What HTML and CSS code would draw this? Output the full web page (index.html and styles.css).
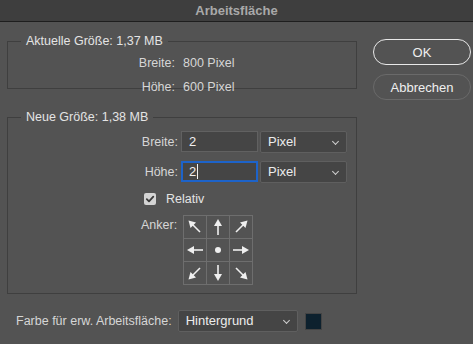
FILE: index.html
```html
<!DOCTYPE html>
<html lang="de">
<head>
    <meta charset="UTF-8">
    <meta name="viewport" content="width=device-width, initial-scale=1.0">
    <title>Arbeitsfläche</title>
    <link rel="stylesheet" href="styles.css">
</head>
<body>
    <div class="dialog">
        <div class="title-bar">Arbeitsfläche</div>
        <div class="dialog-body">
            <div class="dialog-main">
                <fieldset class="group group-current">
                    <legend>Aktuelle Größe: 1,37 MB</legend>
                    <div class="info-row">
                        <span class="info-label">Breite:</span>
                        <span class="info-value">800 Pixel</span>
                    </div>
                    <div class="info-row">
                        <span class="info-label">Höhe:</span>
                        <span class="info-value">600 Pixel</span>
                    </div>
                </fieldset>

                <fieldset class="group group-new">
                    <legend>Neue Größe: 1,38 MB</legend>
                    <div class="field-row">
                        <label class="field-label">Breite:</label>
                        <div class="text-input">2</div>
                        <div class="select-box select-unit">Pixel <span class="chevron"></span></div>
                    </div>
                    <div class="field-row">
                        <label class="field-label">Höhe:</label>
                        <div class="text-input is-focused">2<span class="caret"></span></div>
                        <div class="select-box select-unit">Pixel <span class="chevron"></span></div>
                    </div>
                    <div class="check-row">
                        <span class="checkbox">
                            <svg width="10" height="10" viewBox="0 0 10 10"><path d="M1.8 5.2 L4 7.4 L8.3 2.6" fill="none" stroke="#3a3a3a" stroke-width="1.8" stroke-linecap="round" stroke-linejoin="round"/></svg>
                        </span>
                        <span>Relativ</span>
                    </div>
                    <div class="anchor-row">
                        <span class="field-label anchor-label">Anker:</span>
                        <div class="anchor-grid">
                            <div class="cell"><svg viewBox="0 0 22 22"><path d="M16 16 L8 8"/><path d="M4.5 4.5 L12 6.5 L6.5 12 Z" class="head"/></svg></div>
                            <div class="cell"><svg viewBox="0 0 22 22"><path d="M11 19 L11 8"/><path d="M11 3 L15 10 L7 10 Z" class="head"/></svg></div>
                            <div class="cell"><svg viewBox="0 0 22 22"><path d="M6 16 L14 8"/><path d="M17.5 4.5 L15.5 12 L10 6.5 Z" class="head"/></svg></div>
                            <div class="cell"><svg viewBox="0 0 22 22"><path d="M19 11 L8 11"/><path d="M3 11 L10 7 L10 15 Z" class="head"/></svg></div>
                            <div class="cell"><svg viewBox="0 0 22 22"><circle cx="11" cy="11" r="3" class="head"/></svg></div>
                            <div class="cell"><svg viewBox="0 0 22 22"><path d="M3 11 L14 11"/><path d="M19 11 L12 7 L12 15 Z" class="head"/></svg></div>
                            <div class="cell"><svg viewBox="0 0 22 22"><path d="M16 6 L8 14"/><path d="M4.5 17.5 L6.5 10 L12 15.5 Z" class="head"/></svg></div>
                            <div class="cell"><svg viewBox="0 0 22 22"><path d="M11 3 L11 14"/><path d="M11 19 L15 12 L7 12 Z" class="head"/></svg></div>
                            <div class="cell"><svg viewBox="0 0 22 22"><path d="M6 6 L14 14"/><path d="M17.5 17.5 L10 15.5 L15.5 10 Z" class="head"/></svg></div>
                        </div>
                    </div>
                </fieldset>
            </div>

            <div class="dialog-buttons">
                <button type="button" class="btn btn-default">OK</button>
                <button type="button" class="btn">Abbrechen</button>
            </div>
        </div>

        <div class="footer-row">
            <span class="footer-label">Farbe für erw. Arbeitsfläche:</span>
            <div class="select-box select-fill">Hintergrund <span class="chevron"></span></div>
            <span class="swatch"></span>
        </div>
    </div>
</body>
</html>
```

FILE: styles.css
```css
html, body { margin: 0; padding: 0; background: #535353; }
body { font-family: "Liberation Sans", Arial, sans-serif; font-size: 12.5px; color: #e4e4e4; }

.dialog { width: 473px; height: 344px; overflow: hidden; }
.title-bar { height: 21px; line-height: 21px; background: #3e3e3e; border-bottom: 1px solid #1e1e1e; text-align: center; font-weight: bold; font-size: 13px; color: #a9a9a9; }

.dialog-body { display: flex; padding: 0 0 0 7px; }
.dialog-main { width: 350px; }

.group { margin: 0; border: 1px solid #3f3f3f; padding: 0; }
.group legend { padding: 0 5px; margin-left: 13px; line-height: 14px; }
.group-current { margin-top: 12px; height: 53px; }
.group-new { margin-top: 21px; height: 182px; }

.info-row { display: flex; gap: 8px; height: 24px; align-items: center; }
.info-row:first-of-type { margin-top: 3px; }
.info-label { width: 167px; text-align: right; color: #d6d6d6; }
.info-value { color: #d6d6d6; }

.field-row { display: flex; align-items: center; margin-top: 7px; height: 21px; }
.field-row + .field-row { margin-top: 9px; }
.field-label { width: 170px; text-align: right; padding-right: 2px; color: #d6d6d6; }

.text-input { box-sizing: border-box; width: 77px; height: 21px; margin-left: 1px; padding: 0 7px; line-height: 19px; font-size: 13px; color: #f0f0f0; background: #454545; border: 1px solid #616161; }
.text-input.is-focused { border: 2px solid #1d63c9; padding-left: 6px; line-height: 17px; }
.caret { display: inline-block; width: 1px; height: 15px; background: #f2f2f2; vertical-align: -3px; margin-left: 1px; }

.select-box { box-sizing: border-box; height: 22px; line-height: 20px; padding: 0 7px; font-size: 13px; color: #ececec; background: #454545; border: 1px solid #5f5f5f; border-radius: 2px; position: relative; }
.select-unit { width: 87px; margin-left: 2px; }
.chevron { position: absolute; right: 8px; top: 7px; width: 4px; height: 4px; border-right: 1px solid #d0d0d0; border-bottom: 1px solid #d0d0d0; transform: rotate(45deg); }

.check-row { display: flex; align-items: center; gap: 10px; margin: 9px 0 0 136px; height: 16px; }
.checkbox { width: 12px; height: 12px; border-radius: 2px; background: #d4d4d4; display: flex; align-items: center; justify-content: center; }

.anchor-row { display: flex; margin-top: 8px; }
.anchor-label { width: auto; padding: 0; margin-left: 133px; margin-top: 3px; }
.anchor-grid { display: grid; grid-template-columns: repeat(3, 22px); grid-template-rows: repeat(3, 22px); gap: 1px; padding: 1px; background: #6e6e6e; margin-left: 6px; }
.cell { background: #535353; }
.cell svg { display: block; width: 22px; height: 22px; }
.cell path { stroke: #efefef; stroke-width: 1.6; fill: none; }
.cell .head { fill: #efefef; stroke: none; }

.dialog-buttons { display: flex; flex-direction: column; gap: 9px; margin-left: 16px; margin-top: 17px; }
.btn { box-sizing: border-box; width: 98px; height: 26px; border-radius: 13px; background: transparent; border: 1px solid #6a6a6a; color: #efefef; font-family: inherit; font-size: 13px; padding: 0; }
.btn-default { border-color: #e8e8e8; }

.footer-row { display: flex; align-items: center; margin: 16px 0 0 16px; }
.footer-label { color: #d6d6d6; margin-right: 6px; }
.select-fill { width: 120px; }
.swatch { width: 15px; height: 15px; margin-left: 7px; background: #0d212e; border: 1px solid #444; }
```
